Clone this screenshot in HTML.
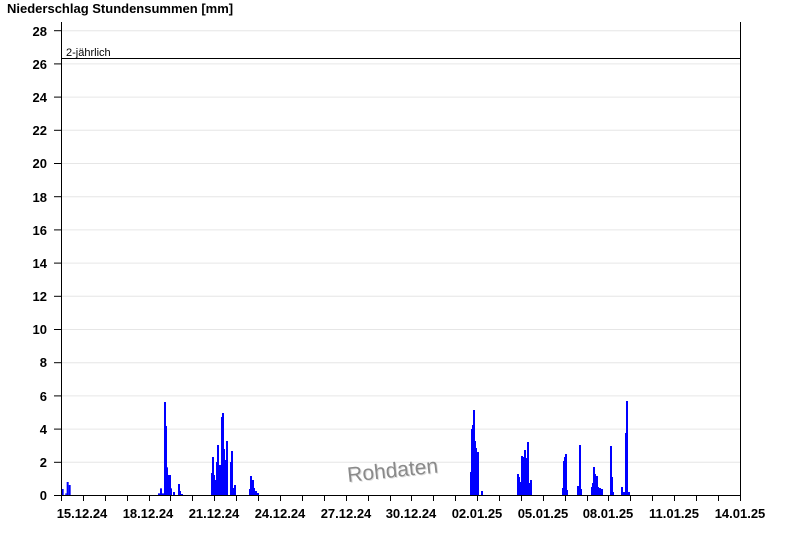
<!DOCTYPE html>
<html><head><meta charset="utf-8"><style>
body{margin:0;background:#fff;width:800px;height:550px;overflow:hidden;font-family:"Liberation Sans",Arial,sans-serif}
</style></head><body>
<svg width="800" height="550" xmlns="http://www.w3.org/2000/svg" style="position:absolute;left:0;top:0">
<text x="7" y="13" font-size="13" font-weight="bold" fill="#000">Niederschlag Stundensummen [mm]</text>
<g stroke="#e6e6e6" stroke-width="1">
<line x1="61" x2="740" y1="462.3" y2="462.3"/><line x1="61" x2="740" y1="429.1" y2="429.1"/>
<line x1="61" x2="740" y1="395.9" y2="395.9"/><line x1="61" x2="740" y1="362.7" y2="362.7"/>
<line x1="61" x2="740" y1="329.5" y2="329.5"/><line x1="61" x2="740" y1="296.3" y2="296.3"/>
<line x1="61" x2="740" y1="263.1" y2="263.1"/><line x1="61" x2="740" y1="229.9" y2="229.9"/>
<line x1="61" x2="740" y1="196.7" y2="196.7"/><line x1="61" x2="740" y1="163.5" y2="163.5"/>
<line x1="61" x2="740" y1="130.3" y2="130.3"/><line x1="61" x2="740" y1="97.1" y2="97.1"/>
<line x1="61" x2="740" y1="63.9" y2="63.9"/><line x1="61" x2="740" y1="30.7" y2="30.7"/>
</g>
<g transform="translate(348,482) rotate(-6)"><text x="1" y="1" font-size="21" fill="#ddd">Rohdaten</text><text x="0" y="0" font-size="21" fill="#8a8a8a">Rohdaten</text></g>
<line x1="61" x2="740" y1="58.5" y2="58.5" stroke="#000"/>
<text x="66" y="56" font-size="11" fill="#000">2-jährlich</text>
<g fill="#0000ff" transform="translate(40,380) scale(0.33333)">
<rect x="65" y="327" width="6" height="18"/><rect x="76" y="340" width="4" height="5"/><rect x="80" y="306" width="6" height="39"/><rect x="86" y="315" width="6" height="30"/>
<rect x="354" y="340" width="6" height="5"/><rect x="360" y="325" width="6" height="20"/><rect x="366" y="340" width="6" height="5"/>
<rect x="372" y="66" width="6" height="279"/><rect x="378" y="138" width="3" height="207"/><rect x="381" y="262" width="3" height="83"/><rect x="384" y="285" width="9" height="60"/><rect x="393" y="325" width="3" height="20"/><rect x="399" y="336" width="6" height="9"/>
<rect x="414" y="312" width="6" height="33"/><rect x="420" y="333" width="3" height="12"/><rect x="423" y="342" width="6" height="3"/>
<rect x="513" y="279" width="3" height="66"/><rect x="516" y="231" width="6" height="114"/><rect x="522" y="285" width="3" height="60"/><rect x="525" y="300" width="3" height="45"/><rect x="528" y="246" width="3" height="99"/><rect x="531" y="195" width="6" height="150"/><rect x="537" y="255" width="6" height="90"/><rect x="543" y="111" width="3" height="234"/><rect x="546" y="99" width="6" height="246"/><rect x="552" y="207" width="3" height="138"/><rect x="555" y="240" width="3" height="105"/><rect x="558" y="183" width="6" height="162"/><rect x="570" y="246" width="3" height="99"/><rect x="573" y="213" width="6" height="132"/><rect x="579" y="324" width="3" height="21"/><rect x="582" y="315" width="6" height="30"/>
<rect x="627" y="327" width="3" height="18"/><rect x="630" y="288" width="6" height="57"/><rect x="636" y="300" width="6" height="45"/><rect x="642" y="324" width="3" height="21"/><rect x="645" y="333" width="6" height="12"/><rect x="651" y="339" width="6" height="6"/>
</g>
<g fill="#0000ff" transform="translate(440,380) scale(0.33333)">
<rect x="90" y="276" width="3" height="69"/><rect x="93" y="147" width="3" height="198"/><rect x="96" y="135" width="3" height="210"/><rect x="99" y="90" width="6" height="255"/><rect x="105" y="183" width="3" height="162"/><rect x="108" y="204" width="3" height="141"/><rect x="111" y="216" width="6" height="129"/><rect x="123" y="333" width="6" height="12"/>
<rect x="231" y="282" width="6" height="63"/><rect x="237" y="291" width="3" height="54"/><rect x="240" y="306" width="3" height="39"/><rect x="243" y="228" width="6" height="117"/><rect x="249" y="231" width="3" height="114"/><rect x="252" y="210" width="6" height="135"/><rect x="258" y="234" width="3" height="111"/><rect x="261" y="186" width="6" height="159"/><rect x="267" y="309" width="3" height="36"/><rect x="270" y="300" width="6" height="45"/>
<rect x="366" y="324" width="3" height="21"/><rect x="369" y="243" width="3" height="102"/><rect x="372" y="231" width="3" height="114"/><rect x="375" y="222" width="6" height="123"/><rect x="381" y="330" width="3" height="15"/>
<rect x="411" y="318" width="6" height="27"/><rect x="417" y="195" width="6" height="150"/><rect x="423" y="327" width="3" height="18"/>
<rect x="453" y="321" width="3" height="24"/><rect x="456" y="309" width="3" height="36"/><rect x="459" y="261" width="6" height="84"/><rect x="465" y="282" width="3" height="63"/><rect x="468" y="288" width="6" height="57"/><rect x="474" y="321" width="3" height="24"/><rect x="477" y="324" width="6" height="21"/><rect x="483" y="327" width="6" height="18"/>
<rect x="510" y="198" width="6" height="147"/><rect x="516" y="291" width="3" height="54"/><rect x="519" y="336" width="3" height="9"/>
<rect x="543" y="321" width="6" height="24"/><rect x="549" y="336" width="6" height="9"/><rect x="555" y="159" width="3" height="186"/><rect x="558" y="63" width="6" height="282"/><rect x="564" y="336" width="6" height="9"/>
</g>
<g stroke="#000" stroke-width="1">
<line x1="61.5" x2="61.5" y1="22" y2="495"/><line x1="740.5" x2="740.5" y1="22" y2="495"/>
<line x1="61" x2="741" y1="495.5" y2="495.5"/>
<line x1="54" x2="61" y1="495.5" y2="495.5"/><line x1="54" x2="61" y1="462.3" y2="462.3"/><line x1="54" x2="61" y1="429.1" y2="429.1"/><line x1="54" x2="61" y1="395.9" y2="395.9"/><line x1="54" x2="61" y1="362.7" y2="362.7"/><line x1="54" x2="61" y1="329.5" y2="329.5"/><line x1="54" x2="61" y1="296.3" y2="296.3"/><line x1="54" x2="61" y1="263.1" y2="263.1"/><line x1="54" x2="61" y1="229.9" y2="229.9"/><line x1="54" x2="61" y1="196.7" y2="196.7"/><line x1="54" x2="61" y1="163.5" y2="163.5"/><line x1="54" x2="61" y1="130.3" y2="130.3"/><line x1="54" x2="61" y1="97.1" y2="97.1"/><line x1="54" x2="61" y1="63.9" y2="63.9"/><line x1="54" x2="61" y1="30.7" y2="30.7"/>
</g>
<g font-size="13" font-weight="bold" text-anchor="end" fill="#000">
<text x="47" y="500">0</text><text x="47" y="467">2</text><text x="47" y="434">4</text><text x="47" y="401">6</text><text x="47" y="367">8</text><text x="47" y="334">10</text><text x="47" y="301">12</text><text x="47" y="268">14</text><text x="47" y="235">16</text><text x="47" y="202">18</text><text x="47" y="168">20</text><text x="47" y="135">22</text><text x="47" y="102">24</text><text x="47" y="69">26</text><text x="47" y="36">28</text>
</g>
<g stroke="#000" stroke-width="1">
<line x1="61.5" x2="61.5" y1="495" y2="501"/><line x1="83.5" x2="83.5" y1="495" y2="501"/><line x1="105.5" x2="105.5" y1="495" y2="501"/><line x1="127.5" x2="127.5" y1="495" y2="501"/><line x1="149.5" x2="149.5" y1="495" y2="501"/><line x1="170.5" x2="170.5" y1="495" y2="501"/><line x1="192.5" x2="192.5" y1="495" y2="501"/><line x1="214.5" x2="214.5" y1="495" y2="501"/><line x1="236.5" x2="236.5" y1="495" y2="501"/><line x1="258.5" x2="258.5" y1="495" y2="501"/><line x1="280.5" x2="280.5" y1="495" y2="501"/><line x1="302.5" x2="302.5" y1="495" y2="501"/><line x1="324.5" x2="324.5" y1="495" y2="501"/><line x1="346.5" x2="346.5" y1="495" y2="501"/><line x1="368.5" x2="368.5" y1="495" y2="501"/><line x1="390.5" x2="390.5" y1="495" y2="501"/><line x1="411.5" x2="411.5" y1="495" y2="501"/><line x1="433.5" x2="433.5" y1="495" y2="501"/><line x1="455.5" x2="455.5" y1="495" y2="501"/><line x1="477.5" x2="477.5" y1="495" y2="501"/><line x1="499.5" x2="499.5" y1="495" y2="501"/><line x1="521.5" x2="521.5" y1="495" y2="501"/><line x1="543.5" x2="543.5" y1="495" y2="501"/><line x1="565.5" x2="565.5" y1="495" y2="501"/><line x1="587.5" x2="587.5" y1="495" y2="501"/><line x1="608.5" x2="608.5" y1="495" y2="501"/><line x1="630.5" x2="630.5" y1="495" y2="501"/><line x1="652.5" x2="652.5" y1="495" y2="501"/><line x1="674.5" x2="674.5" y1="495" y2="501"/><line x1="696.5" x2="696.5" y1="495" y2="501"/><line x1="718.5" x2="718.5" y1="495" y2="501"/><line x1="740.5" x2="740.5" y1="495" y2="501"/>
</g>
<g font-size="13" font-weight="bold" text-anchor="middle" fill="#000">
<text x="82" y="518">15.12.24</text><text x="148" y="518">18.12.24</text><text x="214" y="518">21.12.24</text><text x="280" y="518">24.12.24</text><text x="346" y="518">27.12.24</text><text x="411" y="518">30.12.24</text><text x="477" y="518">02.01.25</text><text x="543" y="518">05.01.25</text><text x="608" y="518">08.01.25</text><text x="674" y="518">11.01.25</text><text x="740" y="518">14.01.25</text>
</g>
</svg>
</body></html>
